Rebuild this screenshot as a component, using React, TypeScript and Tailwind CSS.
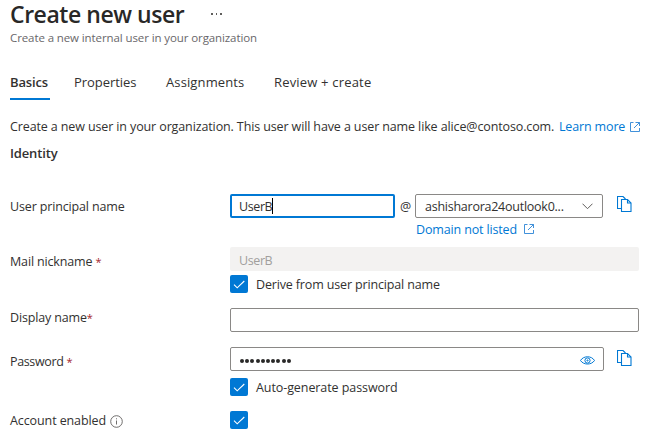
import React from "react";

function ExternalIcon({ className = "" }: { className?: string }) {
  return (
    <svg className={`h-[10px] w-[10px] shrink-0 ${className}`} viewBox="0 0 10 10" fill="none" stroke="#2b84d6" strokeWidth="0.9">
      <path d="M3.5 .5H.5v9h9V6M5.5 .5h4V4M9.5 .5L4 6" />
    </svg>
  );
}

function CopyIcon() {
  return (
    <svg className="h-4 w-[15px] shrink-0" viewBox="0 0 15 16" fill="none" stroke="#0078d4" strokeWidth="1.1">
      <path d="M4 12.5H.5V.5h5.5l2.5 2.5" />
      <path d="M4.5 3.5h6l3.5 3.5v8.5h-9.5z" />
      <path d="M10.5 3.5v3.5h3.5" />
    </svg>
  );
}

function Checkbox() {
  return (
    <span className="flex h-[18px] w-[18px] shrink-0 items-center justify-center rounded-[2px] bg-[#0078d4]">
      <svg className="h-[18px] w-[18px]" viewBox="0 0 18 18" fill="none" stroke="#fff" strokeWidth="1.1">
        <path d="M4 9.6l3.2 3.2L14.3 6" />
      </svg>
    </span>
  );
}

function Required() {
  return <span className="text-[11px] text-[#a4262c]">*</span>;
}

function Label({ children, className = "" }: { children: React.ReactNode; className?: string }) {
  return <div className={`w-[220px] shrink-0 whitespace-nowrap ${className}`}>{children}</div>;
}

export default function App() {
  return (
    <main className="h-[442px] w-[652px] overflow-hidden bg-white pl-[10px] font-['Open_Sans','Noto_Sans',sans-serif] text-[12.5px] leading-[18px] tracking-[-0.15px] text-[#323130]">
      <header>
        <div className="flex h-[28px] items-center">
          <h1 className="w-[201px] whitespace-nowrap text-[23px] font-semibold leading-[28px] tracking-[-0.45px] text-[#292827]">Create new user</h1>
          <div className="flex gap-[3px]">
            <i className="h-[1.5px] w-[1.5px] bg-[#605e5c]" />
            <i className="h-[1.5px] w-[1.5px] bg-[#605e5c]" />
            <i className="h-[1.5px] w-[1.5px] bg-[#605e5c]" />
          </div>
        </div>
        <p className="h-[20px] pt-px text-[11.5px] tracking-[-0.1px] text-[#69676a]">Create a new internal user in your organization</p>
      </header>

      <nav className="mt-[24px] flex h-[28px] whitespace-nowrap pt-px text-[13px]">
        <div className="w-[40px] border-b-2 border-[#0078d4] font-semibold">Basics</div>
        <div className="ml-[24px] w-[92px] tracking-[-0.05px]">Properties</div>
        <div className="w-[108px] tracking-[0.12px]">Assignments</div>
        <div className="tracking-[0.18px]">Review + create</div>
      </nav>

      <div className="mt-[16px] flex h-[20px] items-center whitespace-nowrap">
        <p className="w-[549px] pt-px tracking-[-0.12px]">Create a new user in your organization. This user will have a user name like alice@contoso.com.</p>
        <a className="w-[71px] pt-px text-[#0078d4]">Learn more</a>
        <ExternalIcon className="mt-px" />
      </div>
      <h2 className="mt-[8px] h-[18px] text-[13px] font-semibold">Identity</h2>

      <section className="mt-[32px] flex h-[24px] items-center">
        <Label className="pt-[2px]">User principal name</Label>
        <div className="flex h-6 w-[165px] items-center rounded-[2px] border-2 border-[#0078d4] pl-[7px]">
          <span className="pt-px tracking-[-0.4px]">UserB</span><i className="h-4 w-px bg-black" />
        </div>
        <div className="w-[20px] pl-[5px] pt-[2px]">@</div>
        <div className="flex h-6 w-[188px] items-center rounded-[2px] border border-[#8a8886] pl-[9px]">
          <span className="w-[157px] whitespace-nowrap pt-[2px] tracking-[-0.25px]">ashisharora24outlook0...</span>
          <svg className="mt-px h-[7px] w-[11px]" viewBox="0 0 11 7" fill="none" stroke="#605e5c"><path d="M.5.7l5 5 5-5" /></svg>
        </div>
        <div className="-mt-[5px] ml-[14px]"><CopyIcon /></div>
      </section>
      <div className="ml-[406px] mt-[1px] flex h-[20px] items-center text-[#0078d4]">
        <a className="w-[108px] pt-px">Domain not listed</a><ExternalIcon />
      </div>

      <section className="mt-[8px] flex h-[24px] items-center">
        <Label className="pt-[5px]">Mail nickname <Required /></Label>
        <div className="flex h-6 w-[409px] items-center rounded-[2px] bg-[#f3f2f1] pl-[9px] pt-[3px] tracking-[-0.4px] text-[#a19f9d]">UserB</div>
      </section>
      <div className="ml-[220px] mt-[4px] flex h-[18px] items-center gap-[8px]">
        <Checkbox /><span className="pt-[2px]">Derive from user principal name</span>
      </div>

      <section className="mt-[15px] flex h-[24px] items-center">
        <Label className="pb-[5px]">Display name<Required /></Label>
        <div className="h-6 w-[409px] rounded-[2px] border border-[#8a8886]" />
      </section>

      <section className="mt-[15px] flex h-[24px] items-center">
        <Label className="pt-[5px] tracking-[-0.35px]">Password <Required /></Label>
        <div className="flex h-6 w-[374px] items-center rounded-[2px] border border-[#8a8886] pl-[9px]">
          <div className="flex w-[340px] gap-[1.2px] pt-[3px]">
            {Array.from({ length: 10 }, (_, i) => <i key={i} className="h-1 w-1 rounded-full bg-[#292827]" />)}
          </div>
          <svg className="mt-[3px] h-[9px] w-[15px]" viewBox="0 0 15 9" fill="none" stroke="#0078d4">
            <path d="M.5 4.5C3.5-.5 11.5-.5 14.5 4.5 11.5 9.2 3.5 9.2.5 4.5z" /><circle cx="7.5" cy="4.5" r="2.6" /><circle cx="7.5" cy="4.5" r=".6" />
          </svg>
        </div>
        <div className="-mt-[3px] ml-[13px]"><CopyIcon /></div>
      </section>
      <div className="ml-[220px] mt-[7px] flex h-[18px] items-center gap-[8px]">
        <Checkbox /><span className="pt-px tracking-[-0.08px]">Auto-generate password</span>
      </div>

      <section className="mt-[15px] flex h-[18px] items-center">
        <Label className="flex items-center">
          <span className="w-[100px] pt-[2px] tracking-[-0.1px]">Account enabled</span>
          <svg className="mt-[2px] h-[13px] w-[13px]" viewBox="0 0 13 13" fill="none" stroke="#605e5c" strokeWidth=".9"><circle cx="6.5" cy="6.5" r="5.8" /><path d="M6.5 5.5v4M6.5 3.3v1" /></svg>
        </Label>
        <Checkbox />
      </section>
    </main>
  );
}
